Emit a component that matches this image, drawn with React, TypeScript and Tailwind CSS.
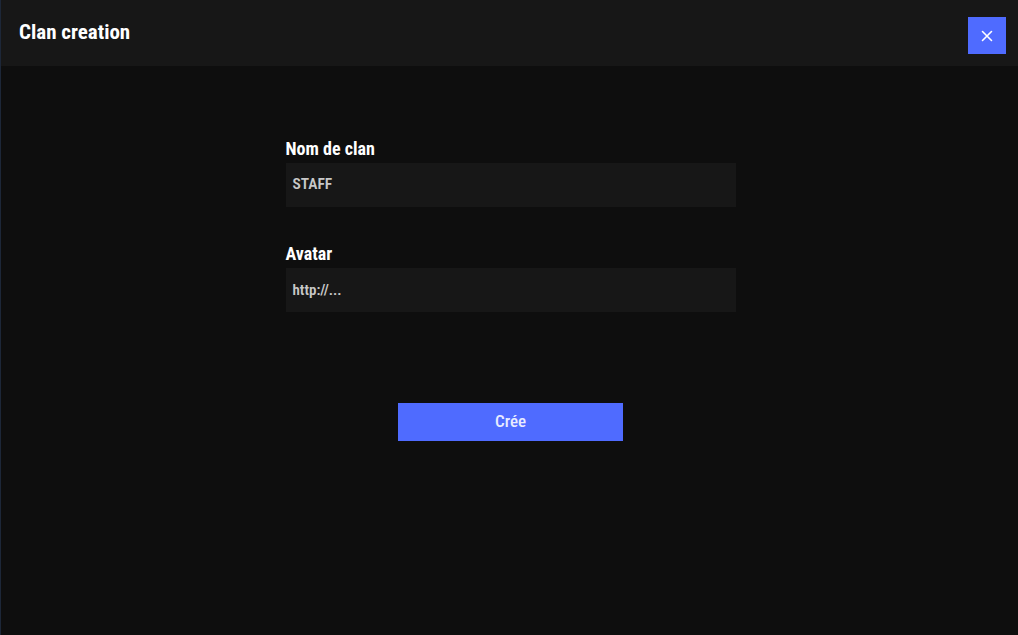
export default function App() {
    return (
        <div
            className="w-[1018px] h-[635px] flex flex-col bg-[#0e0e0e] border-l border-[#1d2738] overflow-hidden"
            style={{ fontFamily: 'Roboto, "Liberation Sans", sans-serif', fontStretch: 'condensed' }}
        >
            <header className="h-[66px] shrink-0 flex items-center justify-between bg-[#171717] pl-[18px] pr-[12px]">
                <h1 className="text-white text-[21px] font-bold leading-[24px] -mt-[2px]">Clan creation</h1>
                <button className="self-start mt-[17px] w-[38px] h-[37px] flex items-center justify-center bg-[#4f6bff]">
                    <svg width="12" height="12" viewBox="0 0 12 12" stroke="#fff" strokeWidth="1.6" strokeLinecap="round">
                        <path d="M1.5 1.5L10.5 10.5M10.5 1.5L1.5 10.5" />
                    </svg>
                </button>
            </header>
            <main className="flex flex-col items-center pt-[73px] pl-[2px]">
                <div className="w-[450px] flex flex-col">
                    <label className="text-white text-[18px] font-bold leading-[20px] mb-[4px]">Nom de clan</label>
                    <div className="h-[44px] bg-[#171717] flex items-center px-[7px] text-[#c8c8c8] text-[15.5px] font-semibold">STAFF</div>
                    <label className="text-white text-[18px] font-bold leading-[20px] mt-[37px] mb-[4px]">Avatar</label>
                    <div className="h-[44px] bg-[#171717] flex items-center px-[7px] text-[#c8c8c8] text-[15px] font-semibold">http://...</div>
                </div>
                <button className="mt-[91px] w-[225px] h-[38px] bg-[#4f6bff] text-[#e8ebff] text-[17px] font-medium">Crée</button>
            </main>
        </div>
    );
}
